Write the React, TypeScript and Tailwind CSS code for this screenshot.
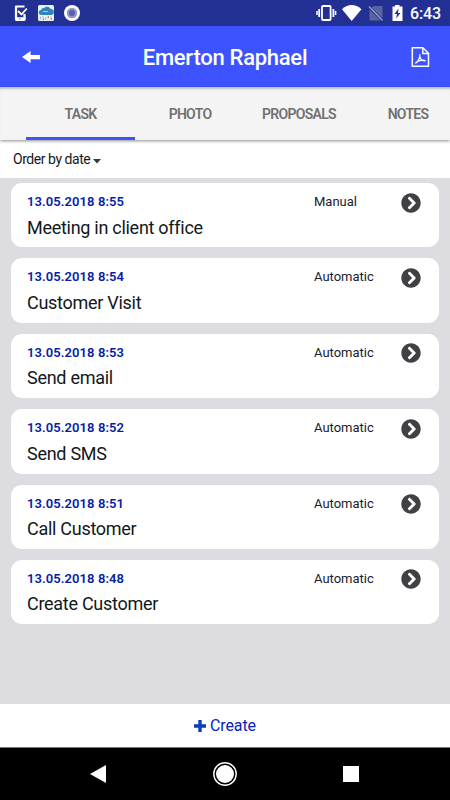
import { useState } from "react";
import { FaChevronCircleRight } from "react-icons/fa";

interface Task {
    date: string;
    title: string;
    mode: string;
}

const tasks: Task[] = [
    { date: "13.05.2018 8:55", title: "Meeting in client office", mode: "Manual" },
    { date: "13.05.2018 8:54", title: "Customer Visit", mode: "Automatic" },
    { date: "13.05.2018 8:53", title: "Send email", mode: "Automatic" },
    { date: "13.05.2018 8:52", title: "Send SMS", mode: "Automatic" },
    { date: "13.05.2018 8:51", title: "Call Customer", mode: "Automatic" },
    { date: "13.05.2018 8:48", title: "Create Customer", mode: "Automatic" },
];

const tabs = [
    { label: "TASK", width: "w-[109px]" },
    { label: "PHOTO", width: "w-[110px]" },
    { label: "PROPOSALS", width: "w-[108px]" },
    { label: "NOTES", width: "w-[110px]" },
];

const StatusBar = () => (
    <div className="flex h-[26px] shrink-0 items-center justify-between bg-[#233093] pr-[9px] pl-[13px] text-white">
        <svg width="70" height="26" viewBox="0 0 70 26" fill="none">
            {/* phone with check mark */}
            <path d="M11.500 6.500H3V19M11.500 14v5" stroke="#fff" strokeWidth="2.200" strokeLinejoin="round" />
            <path d="M2 17.200h10.600v2.300q0 1.500-1.500 1.500h-7.600q-1.500 0-1.500-1.500z" fill="#fff" />
            <path d="M5 11l3.500 3.500L13.800 8.500" stroke="#fff" strokeWidth="1.800" />
            <circle cx="6.800" cy="19" r=".7" fill="#6270b5" />
            {/* rain cloud */}
            <rect x="25" y="5" width="16" height="16" rx="1.500" fill="#e8f1f4" />
            <path d="M28.500 15a2.500 2.500 0 0 1-.3-5 2.500 2.500 0 0 1 3-2 4 4 0 0 1 6.500 1 3 3 0 0 1 .3 6z" fill="#2f83c2" />
            <path d="M30 11.500h5" stroke="#a5cce6" strokeWidth="1" />
            <path d="M27.500 16.500v3M30 16v3M32.500 17v2.500M35 16v3M38 16.500v3" stroke="#9fb0b5" strokeWidth=".8" />
            <path d="M30 19.500h1M35 17h1M38 19h1" stroke="#c9453a" strokeWidth="1" />
            {/* record dot */}
            <circle cx="59" cy="13" r="8" fill="#fff" />
            <circle cx="59" cy="13" r="5.200" fill="#8f95cc" />
            <circle cx="59" cy="13" r="3" fill="#5860ae" />
        </svg>
        <div className="flex items-center">
            <svg width="95" height="26" viewBox="0 0 95 26" fill="none">
                {/* vibrate */}
                <rect x="7" y="6" width="8.600" height="14" rx="1" stroke="#fff" strokeWidth="1.800" />
                <path d="M4.200 9v8M18.400 9v8" stroke="#fff" strokeWidth="1.800" />
                <path d="M2 11v4M20.600 11v4" stroke="#fff" strokeWidth="1.500" />
                {/* wifi */}
                <path d="M27 9.200Q36.500 1 46.500 9.200L36.700 21z" fill="#fff" />
                {/* no sim */}
                <path d="M58.500 6H67.500v12.500L56.500 7.500zM54.500 9.500l11 11h-11z" fill="#59639f" />
                <path d="M54 6.500l13.500 14" stroke="#9aa0c6" strokeWidth="1.300" />
                {/* charging battery */}
                <path d="M80 6.500V5h4.500v1.500h3V21H77.500V6.500z" fill="#fff" />
                <path d="M83.500 8.500l-4 5.500h2.500l-.8 4.500L85.500 13H83z" fill="#233093" />
            </svg>
            <span className="pt-[2px] text-[16px] leading-[24px] font-medium tracking-[-0.1px]">6:43</span>
        </div>
    </div>
);

const Header = () => (
    <header className="flex h-[61px] shrink-0 items-center bg-[#3c53ff] pr-[20px] pl-[22px] text-white">
        <svg width="20" height="14" viewBox="0 0 20 14">
            <path d="M0 7l8.600-6v4H18v4.200H8.600V13z" fill="#fff" />
        </svg>
        <h1 className="flex-1 pt-[3px] pr-[3px] text-center text-[22px] leading-[30px] font-medium tracking-[-0.27px]">
            Emerton Raphael
        </h1>
        <svg width="19" height="20" viewBox="0 0 19 20" fill="none" stroke="#fff" strokeLinejoin="round">
            <path d="M1.300.8h10.500l5.700 5.400v13H1.300z" strokeWidth="1.500" />
            <path d="M11.800 1v5.500h5.500" strokeWidth="1.400" />
            <path d="M4.500 16.500c2.500-1.500 5-6.500 4.300-9.500M8.800 9c.5 3 3 5 5.700 5M4.500 16c2-2 6-3.300 10.200-2.500" strokeWidth="1.200" />
        </svg>
    </header>
);

const TaskCard = ({ date, title, mode }: Task) => (
    <li className="flex h-[64.400px] shrink-0 rounded-[11px] bg-white pl-[16px]">
        <div className="w-[287px] pt-[9px]">
            <p className="text-[13px] leading-[20px] font-semibold tracking-[0.08px] text-[#071ea5]">{date}</p>
            <p className="mt-[2.500px] text-[18px] leading-[26px] tracking-[-0.28px] text-[#101820]">{title}</p>
        </div>
        <p className="w-[87px] pt-[9px] text-[13px] leading-[20px] text-[#17212b]">{mode}</p>
        <FaChevronCircleRight className="mt-[9.500px] size-[20px] text-[#414045]" />
    </li>
);

const App = () => {
    const [active, setActive] = useState("TASK");

    return (
        <div className="flex h-[800px] w-[450px] flex-col overflow-hidden bg-white font-[Roboto,sans-serif]">
            <StatusBar />
            <Header />
            <nav className="z-10 flex h-[53px] shrink-0 bg-[#f4f4f4] pl-[26px] shadow-[0_1px_3px_rgba(0,0,0,0.45),inset_0_3px_2px_-1px_rgba(0,0,0,0.22)]">
                {tabs.map((tab) => (
                    <button
                        key={tab.label}
                        onClick={() => setActive(tab.label)}
                        className={`${tab.width} shrink-0 border-b-[3px] pt-[4px] text-[14px] font-semibold tracking-[-0.7px] text-[#707070] ${
                            active === tab.label ? "border-[#3c53ff]" : "border-transparent"
                        }`}
                    >
                        {tab.label}
                    </button>
                ))}
            </nav>
            <div className="flex h-[38px] shrink-0 items-center gap-[3px] pl-[13px] text-[14px] tracking-[-0.45px] text-[#17171c]">
                <span>Order by date</span>
                <svg width="8" height="5" viewBox="0 0 8 5" className="mt-[5px]">
                    <path d="M0 0h8L4 4.500z" fill="#38383c" />
                </svg>
            </div>
            <ul className="flex h-[526px] shrink-0 flex-col gap-[11px] bg-[#dddce1] px-[11px] pt-[5px]">
                {tasks.map((task) => (
                    <TaskCard key={task.date} {...task} />
                ))}
            </ul>
            <button className="flex h-[43px] shrink-0 items-center justify-center gap-[4px] text-[16px] tracking-[-0.1px] text-[#0822bd]">
                <svg width="12" height="12" viewBox="0 0 12 12">
                    <path d="M6 1.700v8.600M1.700 6h8.600" stroke="#0a40b8" strokeWidth="3.400" strokeLinecap="square" />
                </svg>
                Create
            </button>
            <div className="flex h-[53px] shrink-0 items-center justify-between border-t border-[#777] bg-black pr-[91px] pl-[90px]">
                <svg width="17" height="20" viewBox="0 0 17 20">
                    <path d="M0 10L16 1v18z" fill="#fff" />
                </svg>
                <svg width="24" height="24" viewBox="0 0 24 24">
                    <circle cx="12" cy="12" r="11.200" fill="none" stroke="#fff" strokeWidth="1.400" />
                    <circle cx="12" cy="12" r="9" fill="#fff" />
                </svg>
                <span className="size-[16px] bg-white" />
            </div>
        </div>
    );
};

export default App;
